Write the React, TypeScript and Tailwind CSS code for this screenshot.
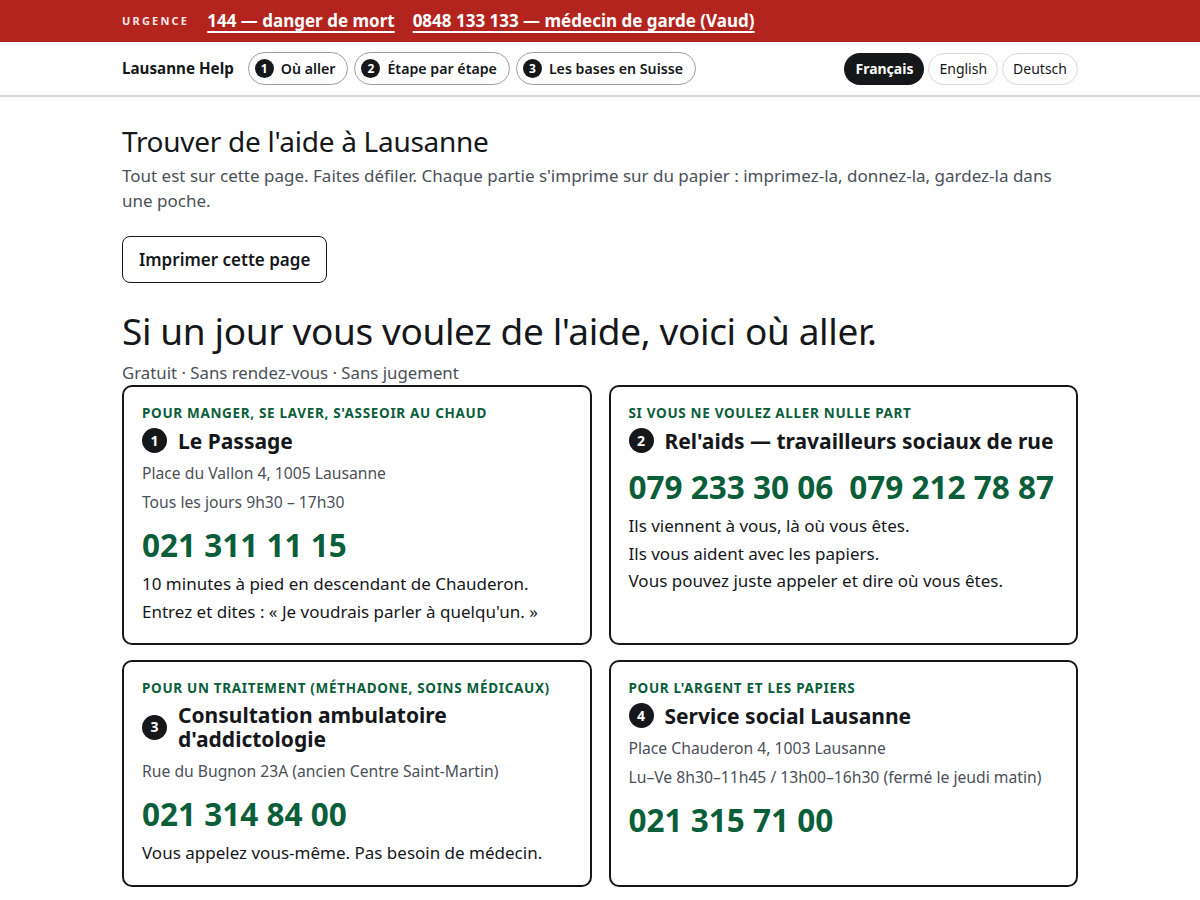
import React from "react";

function Num({ n, size = "md" }: { n: number; size?: "sm" | "md" }) {
  return (
    <span
      className={
        size === "sm"
          ? "inline-flex h-[19px] w-[19px] shrink-0 items-center justify-center rounded-full bg-[#15171a] text-[12px] font-bold leading-none text-white"
          : "inline-flex h-[25px] w-[25px] shrink-0 items-center justify-center rounded-full bg-[#15171a] text-[14px] font-bold leading-none text-white"
      }
    >
      {n}
    </span>
  );
}

function Card({
  label,
  n,
  title,
  lines,
  phones,
  body,
}: {
  label: string;
  n: number;
  title: React.ReactNode;
  lines: string[];
  phones: string[];
  body: string[];
}) {
  return (
    <div className="rounded-[10px] border-2 border-[#15171a] px-[18px] pb-[18px] pt-[17px]">
      <div className="text-[13.5px] font-bold uppercase leading-[18px] tracking-[0.05em] text-[#0b5e3a]">
        {label}
      </div>
      <div className="mt-[6px] flex items-center gap-[11px]">
        <Num n={n} />
        <h3 className="text-[21px] font-bold leading-[24px] text-[#15171a]">{title}</h3>
      </div>
      {lines.length > 0 && (
        <div className="mt-[9px] flex flex-col gap-[7px]">
          {lines.map((l) => (
            <p key={l} className="text-[15.7px] leading-[22px] text-[#4b5058]">
              {l}
            </p>
          ))}
        </div>
      )}
      <div className={"flex gap-4 " + (lines.length > 0 ? "mt-[12px]" : "mt-[14px]")}>
        {phones.map((p) => (
          <span key={p} className="text-[31.5px] font-bold leading-[40px] text-[#0b5e3a]">
            {p}
          </span>
        ))}
      </div>
      {body.length > 0 && (
        <div className="mt-[5px] flex flex-col">
          {body.map((b) => (
            <p key={b} className="text-[17px] leading-[27.5px] text-[#15171a]">
              {b}
            </p>
          ))}
        </div>
      )}
    </div>
  );
}

export default function App() {
  return (
    <div className="min-h-screen bg-white text-[#15171a]" style={{ fontFamily: '"Noto Sans", "DejaVu Sans", sans-serif' }}>
      <div className="h-[42px] bg-[#b3241f] text-white">
        <div className="mx-auto flex h-full max-w-[956px] items-center gap-[18px]">
          <span className="text-[11px] font-bold tracking-[0.2em] opacity-90">URGENCE</span>
          <a href="#" className="text-[17px] font-bold underline underline-offset-[4px] decoration-[1.5px]">
            144 — danger de mort
          </a>
          <a href="#" className="text-[17px] font-bold underline underline-offset-[4px] decoration-[1.5px]">
            0848 133 133 — médecin de garde (Vaud)
          </a>
        </div>
      </div>
      <nav className="border-b-2 border-[#d9dadd]">
        <div className="mx-auto flex h-[53px] max-w-[956px] items-center">
          <span className="mr-[14px] text-[15.2px] font-bold">Lausanne Help</span>
          <div className="flex gap-[6px]">
            {["Où aller", "Étape par étape", "Les bases en Suisse"].map((t, i) => (
              <a
                key={t}
                href="#"
                className="flex h-[33px] items-center gap-[7px] rounded-full border border-[#9a9ca1] pl-[6px] pr-[12px] text-[14.2px] font-semibold"
              >
                <Num n={i + 1} size="sm" />
                {t}
              </a>
            ))}
          </div>
          <div className="ml-auto flex gap-[4px]">
            <span className="flex h-[32px] items-center rounded-full bg-[#15171a] px-[11px] text-[14px] font-bold text-white">
              Français
            </span>
            <span className="flex h-[32px] items-center rounded-full border border-[#d9dadd] px-[10px] text-[14px]">
              English
            </span>
            <span className="flex h-[32px] items-center rounded-full border border-[#d9dadd] px-[10px] text-[14px]">
              Deutsch
            </span>
          </div>
        </div>
      </nav>
      <main className="mx-auto max-w-[956px] pt-[26px]">
        <h1 className="text-[28px] font-normal leading-[36px] tracking-[-0.01em]">Trouver de l'aide à Lausanne</h1>
        <p className="mt-[4px] pr-[20px] text-[17px] leading-[25px] text-[#4b5058]">
          Tout est sur cette page. Faites défiler. Chaque partie s'imprime sur du papier : imprimez-la, donnez-la, gardez-la dans une poche.
        </p>
        <button className="mt-[23px] h-[47px] rounded-[8px] border border-[#15171a] px-4 text-[17px] font-semibold">
          Imprimer cette page
        </button>
        <h2 className="mt-[25px] text-[37px] font-normal leading-[46px] tracking-[-0.01em]">
          Si un jour vous voulez de l'aide, voici où aller.
        </h2>
        <p className="mt-[8px] text-[16.8px] leading-[22px] text-[#4b5058]">Gratuit · Sans rendez-vous · Sans jugement</p>
        <div className="mt-[1px] grid grid-cols-2 gap-x-[17px] gap-y-[15px] pb-10">
          <Card
            label="Pour manger, se laver, s'asseoir au chaud"
            n={1}
            title="Le Passage"
            lines={["Place du Vallon 4, 1005 Lausanne", "Tous les jours 9h30 – 17h30"]}
            phones={["021 311 11 15"]}
            body={["10 minutes à pied en descendant de Chauderon.", "Entrez et dites : « Je voudrais parler à quelqu'un. »"]}
          />
          <Card
            label="Si vous ne voulez aller nulle part"
            n={2}
            title="Rel'aids — travailleurs sociaux de rue"
            lines={[]}
            phones={["079 233 30 06", "079 212 78 87"]}
            body={["Ils viennent à vous, là où vous êtes.", "Ils vous aident avec les papiers.", "Vous pouvez juste appeler et dire où vous êtes."]}
          />
          <Card
            label="Pour un traitement (méthadone, soins médicaux)"
            n={3}
            title={<>Consultation ambulatoire<br />d'addictologie</>}
            lines={["Rue du Bugnon 23A (ancien Centre Saint-Martin)"]}
            phones={["021 314 84 00"]}
            body={["Vous appelez vous-même. Pas besoin de médecin."]}
          />
          <Card
            label="Pour l'argent et les papiers"
            n={4}
            title="Service social Lausanne"
            lines={["Place Chauderon 4, 1003 Lausanne", "Lu–Ve 8h30–11h45 / 13h00–16h30 (fermé le jeudi matin)"]}
            phones={["021 315 71 00"]}
            body={[]}
          />
        </div>
      </main>
    </div>
  );
}
